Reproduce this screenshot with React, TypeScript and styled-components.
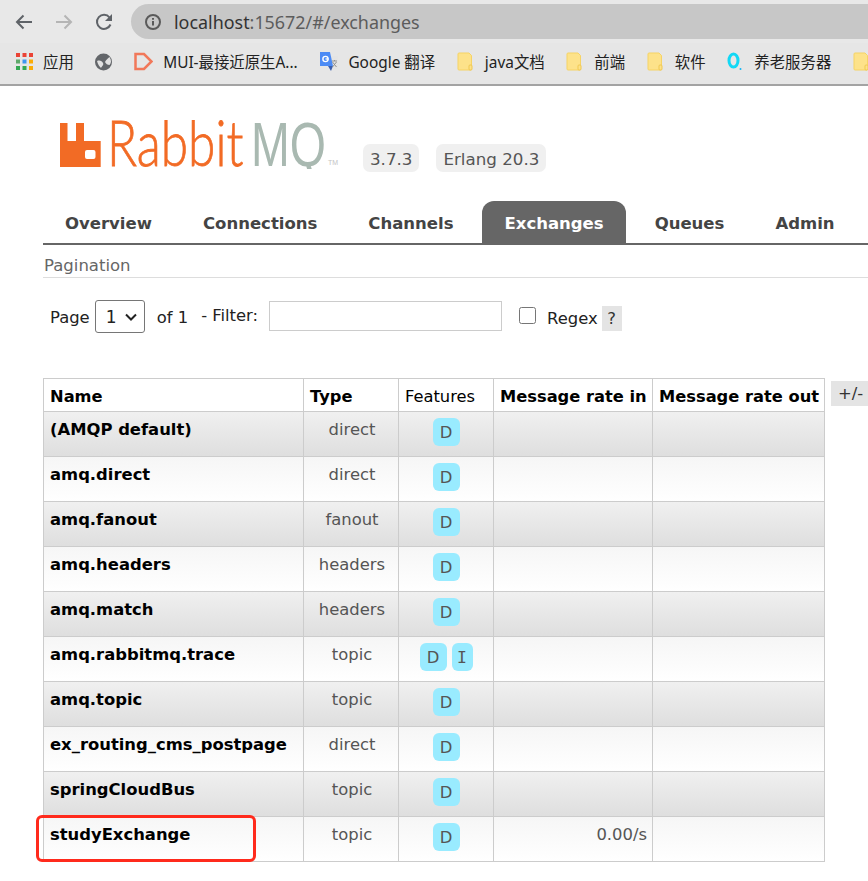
import styled, { createGlobalStyle } from 'styled-components';

const GlobalStyle = createGlobalStyle`
  html, body {
    margin: 0;
    padding: 0;
    background: #fff;
    overflow: hidden;
  }
  body {
    font-family: 'DejaVu Sans', Verdana, sans-serif;
    width: 868px;
    height: 881px;
  }
`;

const tabs = ['Overview', 'Connections', 'Channels', 'Exchanges', 'Queues', 'Admin'];

const exchanges = [
  { name: '(AMQP default)', type: 'direct' },
  { name: 'amq.direct', type: 'direct' },
  { name: 'amq.fanout', type: 'fanout' },
  { name: 'amq.headers', type: 'headers' },
  { name: 'amq.match', type: 'headers' },
  { name: 'amq.rabbitmq.trace', type: 'topic', internal: true },
  { name: 'amq.topic', type: 'topic' },
  { name: 'ex_routing_cms_postpage', type: 'direct' },
  { name: 'springCloudBus', type: 'topic' },
  { name: 'studyExchange', type: 'topic', rate: '0.00/s' },
];

const FolderIcon = () => (
  <svg width="18" height="19" viewBox="0 0 18 19">
    <path d="M1 2a1 1 0 0 1 1-1h10l2.500 2.500V17a1 1 0 0 1-1 1H2a1 1 0 0 1-1-1z" fill="#fde28a" stroke="#f6d365" />
    <rect x="12" y="13" width="3" height="5" rx="1" fill="#fde28a" stroke="#f0c850" />
  </svg>
);

const AppsIcon = () => {
  const colors = ['#ea4335', '#ea4335', '#ea4335', '#5fa86a', '#3f96f0', '#fbac05', '#34a853', '#34a853', '#fbac05'];
  return (
    <svg width="17" height="17" viewBox="0 0 17 17">
      {colors.map((color, i) => (
        <rect key={i} x={(i % 3) * 6.500} y={Math.floor(i / 3) * 6.500} width="4" height="4" fill={color} />
      ))}
    </svg>
  );
};

const GlobeIcon = () => (
  <svg width="17" height="18" viewBox="0 0 17 18">
    <circle cx="8.500" cy="9" r="8.500" fill="#63666a" />
    <path d="M2 8c3-1 5 0 6 2s-1 3-2 5c-1-1-3-3-4-7zM10 9c1-2 3-4 4.500-5 2 3 2 6 0 8-2 0-3.500-1-4.500-3z" fill="#eeeeee" opacity="0.900" />
  </svg>
);

const MuiIcon = () => (
  <svg width="19" height="19" viewBox="0 0 19 19">
    <path d="M1.500 2h8.500l7.500 7.500-7.500 7.500H1.500z" fill="none" stroke="#f1785a" strokeWidth="2.500" />
  </svg>
);

const TranslateIcon = () => (
  <svg width="19" height="21" viewBox="0 0 19 21">
    <path d="M8 5h11v13H10z" fill="#e4e4e4" />
    <path d="M1 1h10l3 14H1z" fill="#4c8bf5" />
    <path d="M9 15l3 5 2-5z" fill="#3a5fb0" />
    <circle cx="6.500" cy="8" r="2.600" fill="none" stroke="#fff" strokeWidth="1.400" />
    <path d="M6.500 8h3" stroke="#fff" strokeWidth="1.300" />
    <path d="M13 10h5M15.500 9v1M13.500 16l4-5M13.500 11l4 5" stroke="#8a8a8a" strokeWidth="0.900" fill="none" />
  </svg>
);

const QIcon = () => (
  <svg width="17" height="19" viewBox="0 0 17 19">
    <ellipse cx="6.500" cy="8.500" rx="4.500" ry="6.500" fill="none" stroke="#12d8f5" strokeWidth="3" />
    <circle cx="13.500" cy="17" r="1" fill="#12b5f5" />
  </svg>
);

const Logo = () => (
  <svg width="286" height="49" viewBox="0 0 286 49">
    <path
      fillRule="evenodd"
      d="M0 3h7.500v18H16V3h8v18h16.700v26H0zM27 30h6.500a2 2 0 0 1 2 2v5a2 2 0 0 1-2 2H27a2 2 0 0 1-2-2v-5a2 2 0 0 1 2-2z"
      fill="#f26b25"
    />
    <text transform="translate(47 46) scale(0.775 1)" fontFamily="Lato, sans-serif" fontWeight="300" fontSize="64" fill="#f26b25" stroke="#f26b25" strokeWidth="0.800">
      Rabbit
    </text>
    <text transform="translate(191 46) scale(0.750 1)" fontFamily="'Liberation Sans', sans-serif" fontSize="62" fill="#a9b9b1">
      MQ
    </text>
    <text x="268" y="44.500" fontFamily="'Liberation Sans', sans-serif" fontSize="7" fill="#c4c4c4">
      TM
    </text>
  </svg>
);

export default function App() {
  return (
    <>
      <GlobalStyle />
      <Chrome>
        <Toolbar>
          <NavButton>
            <svg width="18" height="16" viewBox="0 0 18 16">
              <path d="M17 8H2M8.500 1.500 2 8l6.500 6.500" fill="none" stroke="#5f6368" strokeWidth="2" />
            </svg>
          </NavButton>
          <NavButton>
            <svg width="18" height="16" viewBox="0 0 18 16">
              <path d="M1 8h15M9.500 1.500 16 8l-6.500 6.500" fill="none" stroke="#b5b5b5" strokeWidth="2" />
            </svg>
          </NavButton>
          <NavButton>
            <svg width="18" height="18" viewBox="0 0 18 18">
              <path d="M15.500 11.500A7 7 0 1 1 14.500 4.500" fill="none" stroke="#5f6368" strokeWidth="2" />
              <path d="M17 1v7h-7z" fill="#5f6368" />
            </svg>
          </NavButton>
          <AddressBar>
            <svg width="16" height="16" viewBox="0 0 16 16">
              <circle cx="8" cy="8" r="7" fill="none" stroke="#5a5a5a" strokeWidth="2" />
              <path d="M8 7v4.500M8 4v1.800" stroke="#5a5a5a" strokeWidth="2" />
            </svg>
            <Url>
              localhost<UrlRest>:15672/#/exchanges</UrlRest>
            </Url>
          </AddressBar>
        </Toolbar>
        <Bookmarks>
          <Bookmark><AppsIcon /><span>应用</span></Bookmark>
          <Bookmark><GlobeIcon /></Bookmark>
          <Bookmark><MuiIcon /><span>MUI-最接近原生A...</span></Bookmark>
          <Bookmark><TranslateIcon /><span>Google 翻译</span></Bookmark>
          <Bookmark><FolderIcon /><span>java文档</span></Bookmark>
          <Bookmark><FolderIcon /><span>前端</span></Bookmark>
          <Bookmark><FolderIcon /><span>软件</span></Bookmark>
          <Bookmark><QIcon /><span>养老服务器</span></Bookmark>
          <Bookmark><FolderIcon /></Bookmark>
        </Bookmarks>
      </Chrome>

      <Page>
        <Header>
          <Logo />
          <Badge>3.7.3</Badge>
          <Badge>Erlang 20.3</Badge>
        </Header>

        <TabBar>
          {tabs.map((tab) => (
            <Tab key={tab} $active={tab === 'Exchanges'}>{tab}</Tab>
          ))}
        </TabBar>

        <SectionTitle>Pagination</SectionTitle>

        <FilterRow>
          <FilterText>Page</FilterText>
          <PageSelect>
            1
            <svg width="12" height="8" viewBox="0 0 12 8">
              <path d="M1 1.500l5 5 5-5" fill="none" stroke="#222" strokeWidth="2" />
            </svg>
          </PageSelect>
          <FilterText>of 1</FilterText>
          <FilterLabel>- Filter:</FilterLabel>
          <FilterInput />
          <RegexBox type="checkbox" />
          <RegexLabel>Regex</RegexLabel>
          <HelpBox>?</HelpBox>
        </FilterRow>

        <TableArea>
          <Table>
            <thead>
              <tr>
                <NameHead>Name</NameHead>
                <TypeHead>Type</TypeHead>
                <FeatureHead>Features</FeatureHead>
                <RateHead>Message rate in</RateHead>
                <RateOutHead>Message rate out</RateOutHead>
              </tr>
            </thead>
            <tbody>
              {exchanges.map((item, i) => (
                <Row key={item.name} $alt={i % 2 === 0}>
                  <NameCell>{item.name}</NameCell>
                  <TypeCell>{item.type}</TypeCell>
                  <FeatureCell>
                    <FeatureList>
                      <Feature>D</Feature>
                      {item.internal && <InternalFeature>I</InternalFeature>}
                    </FeatureList>
                  </FeatureCell>
                  <RateCell>{item.rate}</RateCell>
                  <RateCell />
                </Row>
              ))}
            </tbody>
          </Table>
          <ColumnToggle>+/-</ColumnToggle>
          <Highlight />
        </TableArea>
      </Page>
    </>
  );
}

const Chrome = styled('div')`
  background: #e6e6e6;
  border-bottom: 2px solid #a3a3a3;
  font-family: 'Noto Sans', 'Noto Sans CJK SC', sans-serif;
`;

const Toolbar = styled('div')`
  height: 43px;
  display: flex;
  align-items: flex-start;
  padding: 4px 0 0 15px;
  box-sizing: border-box;
  background: #e8e8e8;
`;

const NavButton = styled('div')`
  width: 40px;
  height: 35px;
  display: flex;
  align-items: center;
`;

const AddressBar = styled('div')`
  flex: 1;
  height: 35px;
  margin-left: -4px;
  padding-left: 14px;
  display: flex;
  align-items: center;
  gap: 13px;
  background: #c7c7c7;
  border-radius: 18px 0 0 18px;
`;

const Url = styled('span')`
  font-size: 17.900px;
  color: #333;
`;

const UrlRest = styled('span')`
  color: #5c5c5c;
`;

const Bookmarks = styled('div')`
  height: 41px;
  display: flex;
  align-items: center;
  gap: 21.700px;
  padding: 0 0 4px 16px;
  box-sizing: border-box;
  overflow: hidden;
  font-size: 15.400px;
  color: #222;
  white-space: nowrap;
`;

const Bookmark = styled('div')`
  display: flex;
  align-items: center;
  gap: 10px;
  flex: none;
`;

const Page = styled('div')`
  padding-left: 43px;
`;

const Header = styled('header')`
  display: flex;
  align-items: flex-start;
  padding: 34px 0 0 17px;
  height: 115px;
  box-sizing: border-box;
  gap: 17px;
`;

const Badge = styled('span')`
  height: 28px;
  margin-top: 24px;
  padding: 1px 7px 0;
  display: flex;
  align-items: center;
  box-sizing: border-box;
  background: #f0f0f0;
  border-radius: 7px;
  font-size: 16.700px;
  color: #555;
`;

const TabBar = styled('nav')`
  display: flex;
  gap: 7px;
  height: 44px;
  box-sizing: border-box;
  border-bottom: 2px solid #666;
`;

const Tab = styled('a')<{ $active: boolean }>`
  height: 43px;
  padding: 1px 22px 0;
  display: flex;
  align-items: center;
  box-sizing: border-box;
  flex: none;
  font-size: 16.500px;
  font-weight: 700;
  color: ${({ $active }) => ($active ? '#fff' : '#444')};
  background: ${({ $active }) => ($active ? '#666' : 'transparent')};
  border-radius: 12px 12px 0 0;
`;

const SectionTitle = styled('h2')`
  margin: 0;
  height: 33px;
  padding: 12px 0 0 1px;
  box-sizing: border-box;
  border-bottom: 1px solid #ddd;
  font-size: 16.500px;
  line-height: 18px;
  font-weight: 400;
  color: #666;
`;

const FilterRow = styled('div')`
  display: flex;
  align-items: center;
  height: 33px;
  margin-top: 22px;
  padding-left: 7px;
  font-size: 16.400px;
  color: #222;
`;

const FilterText = styled('span')`
  margin-top: 2px;
`;

const FilterLabel = styled('span')`
  margin: -3px 11px 0 13px;
`;

const RegexLabel = styled('span')`
  margin-top: 4px;
`;

const PageSelect = styled('div')`
  width: 50px;
  height: 33px;
  margin: 0 12px 0 5px;
  padding: 0 7px 0 10px;
  display: flex;
  align-items: center;
  justify-content: space-between;
  box-sizing: border-box;
  border: 1px solid #767676;
  border-radius: 3px;
  font-size: 17px;
`;

const FilterInput = styled('input')`
  width: 233px;
  height: 30px;
  margin-top: -2px;
  padding: 0;
  box-sizing: border-box;
  border: 1px solid #ccc;
`;

const RegexBox = styled('input')`
  width: 17px;
  height: 17px;
  margin: -3px 11px 0 17px;
`;

const HelpBox = styled('span')`
  width: 20px;
  height: 25px;
  margin: 4px 0 0 4px;
  display: flex;
  align-items: center;
  justify-content: center;
  background: #e4e4e4;
  color: #333;
`;

const TableArea = styled('div')`
  position: relative;
  margin-top: 45px;
`;

const Table = styled('table')`
  width: 781px;
  table-layout: fixed;
  border-collapse: collapse;
  font-size: 16.400px;
`;

const HeadCell = styled('th')`
  height: 33px;
  padding: 2px 0 0 6px;
  box-sizing: border-box;
  border: 1px solid #ccc;
  text-align: left;
  font-size: 16.300px;
  color: #000;
  white-space: nowrap;
`;

const NameHead = styled(HeadCell)`
  width: 260px;
`;

const TypeHead = styled(HeadCell)`
  width: 95px;
`;

const FeatureHead = styled(HeadCell)`
  width: 95px;
  font-weight: 400;
`;

const RateHead = styled(HeadCell)`
  width: 159px;
`;

const RateOutHead = styled(HeadCell)`
  width: 172px;
`;

const Row = styled('tr')<{ $alt: boolean }>`
  height: 45px;
  background: ${({ $alt }) =>
    $alt ? 'linear-gradient(#f0f0f0, #dedede)' : 'linear-gradient(#f6f6f6, #fff)'};
`;

const BodyCell = styled('td')`
  height: 45px;
  padding: 9px 6px 0;
  box-sizing: border-box;
  vertical-align: top;
  border: 1px solid #ccc;
  line-height: 18px;
`;

const NameCell = styled(BodyCell)`
  font-weight: 700;
  color: #000;
  white-space: nowrap;
`;

const TypeCell = styled(BodyCell)`
  padding: 9px 5px 0 7px;
  text-align: center;
  color: #555;
`;

const FeatureCell = styled(BodyCell)`
  padding-top: 6px;
`;

const FeatureList = styled('div')`
  display: flex;
  justify-content: center;
  gap: 5px;
`;

const Feature = styled('abbr')`
  width: 27px;
  height: 28px;
  padding-top: 2px;
  display: flex;
  align-items: center;
  justify-content: center;
  box-sizing: border-box;
  background: #99ebff;
  border-radius: 6px;
  color: #555;
  font-size: 16.400px;
`;

const InternalFeature = styled(Feature)`
  width: 21px;
  font-family: 'DejaVu Sans Mono', monospace;
`;

const RateCell = styled(BodyCell)`
  text-align: right;
  padding-right: 5px;
  color: #555;
`;

const ColumnToggle = styled('span')`
  position: absolute;
  top: 3px;
  left: 788px;
  width: 37px;
  height: 25px;
  padding-left: 7px;
  display: flex;
  align-items: center;
  box-sizing: border-box;
  background: #e4e4e4;
  color: #333;
  font-size: 16.400px;
`;

const Highlight = styled('div')`
  position: absolute;
  left: -7px;
  bottom: 0;
  width: 220px;
  height: 47px;
  box-sizing: border-box;
  border: 3px solid #ff2a1c;
  border-radius: 6px;
  pointer-events: none;
`;
